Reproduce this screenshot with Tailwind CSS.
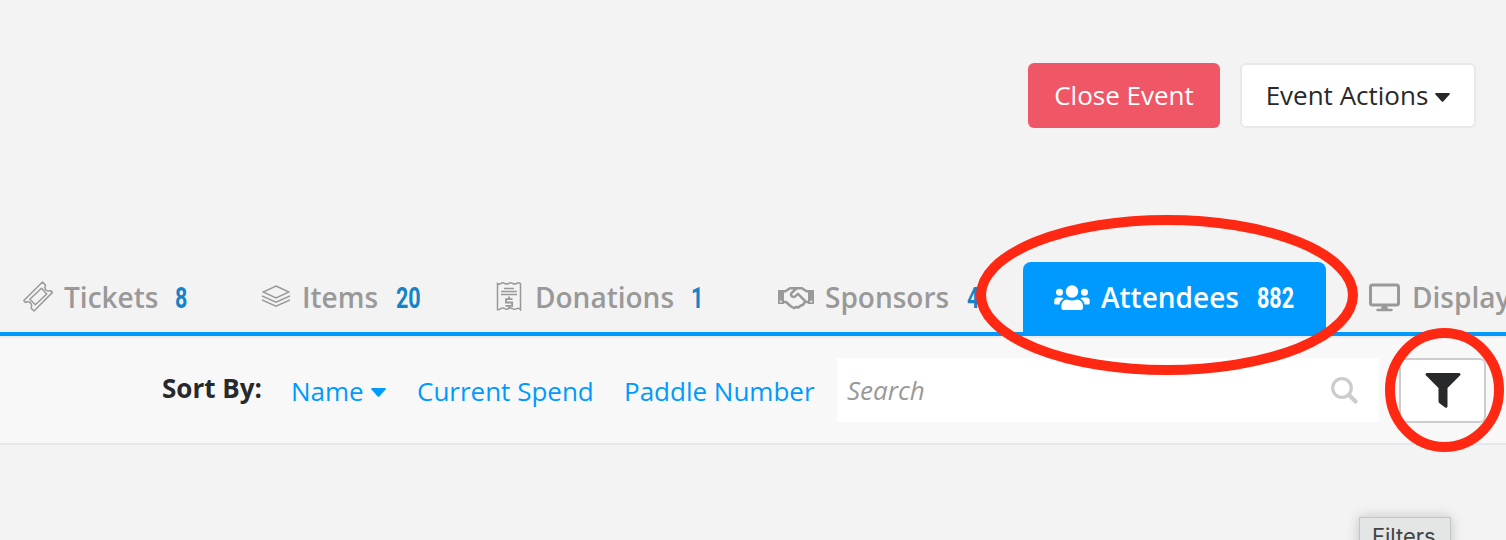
<!DOCTYPE html>
<html lang="en">
<head>
  <meta charset="UTF-8" />
  <meta name="viewport" content="width=device-width, initial-scale=1.0" />
  <title>Event Attendees</title>
  <script src="https://cdn.jsdelivr.net/npm/@tailwindcss/browser@4"></script>
</head>
<body class="bg-[#f3f3f3] font-['Open_Sans',sans-serif] text-[#27292b]">
  <div class="relative h-[540px] w-[1506px] overflow-hidden">

    <!-- Header buttons -->
    <header class="flex h-[262px] items-start justify-end gap-5 pt-[63px] pr-[30px]">
      <button class="h-[65px] w-[192px] rounded-md bg-[#ef5767] text-[26px] whitespace-nowrap text-white">Close Event</button>
      <button class="flex h-[65px] w-[236px] items-center justify-center gap-[7px] rounded-md border-2 border-[#e5e9ec] bg-white text-[26px] whitespace-nowrap">
        Event Actions
        <svg class="mt-1 h-[9px] w-[15px]" viewBox="0 0 15 9" fill="currentColor"><path d="M1 0h13q1.500.300.500 1.500L8.500 8.200q-1 1-2 0L.5 1.500Q-.5.300 1 0z" /></svg>
      </button>
    </header>

    <!-- Tabs -->
    <nav class="flex h-[74px] border-b-4 border-[#009aff] text-[28px] leading-[70px] font-bold whitespace-nowrap text-[#999]">
      <a href="#" class="flex w-[239px] shrink-0 items-start pl-[23px]">
        <svg class="mt-[19px] mr-[11px] h-[31px] w-[30px] shrink-0" viewBox="0 0 30 31" fill="none" stroke="currentColor" stroke-width="1.5" stroke-linejoin="round">
          <path d="M19.500 1 22.500 4q-1.500 3.200.500 5t5 .7l1.500 1.700L11 30 8 27q1.500-3-.5-5t-5-.5L.8 19.500z" />
          <path d="M18.500 7.300 23.800 13 12.300 23.700 6.800 18.300z" />
        </svg>
        <span class="w-[111px] font-semibold">Tickets</span>
        <span class="origin-left scale-x-[.73] font-['Roboto'] text-[29.5px] leading-[72px] text-[#1683c7]">8</span>
      </a>
      <a href="#" class="flex w-[235px] shrink-0 items-start pl-[23px]">
        <svg class="mt-[23px] mr-3 h-[23px] w-[28px] shrink-0" viewBox="0 0 28 23" fill="none" stroke="currentColor" stroke-width="1.500">
          <path d="M14 1 27 7 14 13 1 7zM0 11l14 6.200L28 11M0 15l14 6.300L28 15" />
        </svg>
        <span class="w-[94px] font-semibold">Items</span>
        <span class="origin-left scale-x-[.73] font-['Roboto'] text-[29.5px] leading-[72px] text-[#1683c7]">20</span>
      </a>
      <a href="#" class="flex w-[282px] shrink-0 items-start pl-[22px]">
        <svg class="mt-[19px] mr-[13px] h-[30px] w-[26px] shrink-0" viewBox="0 0 26 30" fill="none" stroke="currentColor" stroke-width="1.500">
          <path d="M1.500 28.700V2.500q1.600 1.300 3.200 0 2-1.600 4 0 2 1 4 0 2-1.600 4 0 2 1 4 0 1.900-1.300 3.800 0v26.200q-1.900-2.400-3.800-1-2 1.300-4 0-2-1.300-4 0-2 1.300-4 0-2-1.300-4 0-1.600 1.200-3.200 1z" />
          <path d="M8 7.500h10M5 10.500h16M5 13.500h16" />
          <path d="M16.500 18.200H10v3.300h6.200v3.400H9.500M13 15.500v2.700M13 25v2.500" stroke-width="1.800" />
        </svg>
        <span class="w-[156px] font-semibold">Donations</span>
        <span class="origin-left scale-x-[.73] font-['Roboto'] text-[29.5px] leading-[72px] text-[#1683c7]">1</span>
      </a>
      <a href="#" class="flex w-[244px] shrink-0 items-start pl-[22px]">
        <svg class="mt-[24px] mr-[11px] h-[24px] w-[36px] shrink-0" viewBox="0 0 36 24" fill="none" stroke="currentColor" stroke-width="2.500" stroke-linejoin="round" stroke-linecap="round">
          <path d="M0 4h6v14H0zM36 4h-6v14h6z" fill="currentColor" stroke="none" />
          <path d="M5 5.300h2.500L12 2.200h12l4.500 3.100H31M5 16h3l5 4.500 3 1.500 2.500-1 2 .5 2.300-2 2-.5 2-3H31M18.500 2.500l-5 4.500q-1.300 2 .6 3.500 1.700 1 3.300-.3l2.600-2.400 7 7" />
          <circle cx="2.800" cy="15.500" r="1.100" fill="#f3f3f3" stroke="none" /><circle cx="33.200" cy="15.500" r="1.100" fill="#f3f3f3" stroke="none" />
        </svg>
        <span class="w-[142px] font-semibold">Sponsors</span>
        <span class="origin-left scale-x-[.73] font-['Roboto'] text-[29.5px] leading-[72px] text-[#1683c7]">4</span>
      </a>
      <a href="#" class="ml-[23px] flex h-[74px] w-[303px] shrink-0 items-start rounded-t-lg bg-[#009aff] pl-[31px] text-white">
        <svg class="mt-[23px] mr-[11px] h-[25px] w-[36px] shrink-0" viewBox="0 0 36 25" fill="currentColor">
          <circle cx="18" cy="6.500" r="6.200" /><circle cx="5.500" cy="7.300" r="3.500" /><circle cx="30.500" cy="7.300" r="3.500" />
          <path d="M13 14.500q5 2 10 0 5.800.5 6 6.500v1.800q0 2.200-2.200 2.200H9.500Q7.300 25 7.300 22.800V21q.2-6 5.700-6.500zM3.500 12.600h4l2.200 1q-3.700 2-4.300 6H1.600Q.3 19.600.3 18.200v-2.500q0-2.900 3.200-3.100zM32.500 12.600h-4l-2.200 1q3.700 2 4.300 6h3.800q1.300 0 1.300-1.400v-2.500q0-2.900-3.200-3.100z" />
        </svg>
        <span class="w-[156px] font-semibold">Attendees</span>
        <span class="origin-left scale-x-[.73] font-['Roboto'] text-[29.5px] leading-[72px]">882</span>
      </a>
      <a href="#" class="flex shrink-0 items-start pl-[43px]">
        <svg class="mt-[21px] mr-[12px] h-[29px] w-[31px] shrink-0" viewBox="0 0 31 29" fill="none" stroke="currentColor" stroke-width="3">
          <rect x="1.500" y="2" width="28" height="20" rx="2" />
          <path d="M8.500 27h14" stroke-linecap="round" stroke-width="2.500" /><path d="M12 26.500l1-4.500h5l1 4.500z" fill="currentColor" stroke="none" />
        </svg>
        <span class="font-semibold">Display</span>
      </a>
    </nav>

    <!-- Sort and search -->
    <section class="flex h-[109px] items-start border-t-2 border-b-2 border-t-[#ececee] border-b-[#e4e8eb] bg-[#f8f8f8] pt-5 text-[26px] leading-[64px] whitespace-nowrap">
      <span class="ml-[162px] w-[129px] shrink-0 leading-[60px] font-bold">Sort By:</span>
      <a href="#" class="flex w-[126px] shrink-0 items-center gap-[7px] text-[#009aff]">
        <span class="pt-px">Name</span>
        <svg class="mt-1 h-[9px] w-[15px]" viewBox="0 0 15 9" fill="currentColor"><path d="M1 0h13q1.500.300.500 1.500L8.500 8.200q-1 1-2 0L.5 1.500Q-.5.300 1 0z" /></svg>
      </a>
      <a href="#" class="w-[207px] shrink-0 pt-px text-[#009aff]">Current Spend</a>
      <a href="#" class="w-[213px] shrink-0 pt-px text-[#009aff]">Paddle Number</a>
      <div class="flex h-[64px] w-[542px] shrink-0 items-center justify-between bg-white pr-[21px] pl-[10px]">
        <span class="text-[#999] italic">Search</span>
        <svg class="h-[27px] w-[27px]" viewBox="0 0 27 27" fill="none" stroke="#ccc"><circle cx="11" cy="11" r="9.300" stroke-width="3.200" /><path d="M18 18l6.500 6.500" stroke-width="4.200" stroke-linecap="round" /></svg>
      </div>
      <button class="ml-5 flex h-[65px] w-[87px] shrink-0 items-center justify-center rounded-md border-2 border-[#ccc] bg-white">
        <svg class="h-[35px] w-[36px]" viewBox="0 0 36 35" fill="currentColor"><path d="M2 0h32q2 .2 1.400 2L22.500 15v18.500q-.3 1.700-2 1.200L14.200 30q-.7-.6-.7-1.500V15L.6 2Q0 .2 2 0z" /></svg>
      </button>
    </section>

    <!-- Filter button tooltip -->
    <div class="absolute top-[517px] left-[1359px] h-10 w-[92px] border border-[#c4c6c5] bg-[#e3e6e5] pl-[12px] font-['Inter'] text-[22px] leading-[37px] text-[#444] shadow-[0_0_12px_rgba(0,0,0,0.2)]">Filters</div>

    <!-- Highlight rings -->
    <svg class="pointer-events-none absolute inset-0 h-[540px] w-[1506px]" viewBox="0 0 1506 540" fill="none" stroke="#ff2812" stroke-width="10">
      <ellipse cx="1167" cy="295" rx="186" ry="75" />
      <ellipse cx="1444.500" cy="390" rx="54.500" ry="57" />
    </svg>
  </div>
</body>
</html>
